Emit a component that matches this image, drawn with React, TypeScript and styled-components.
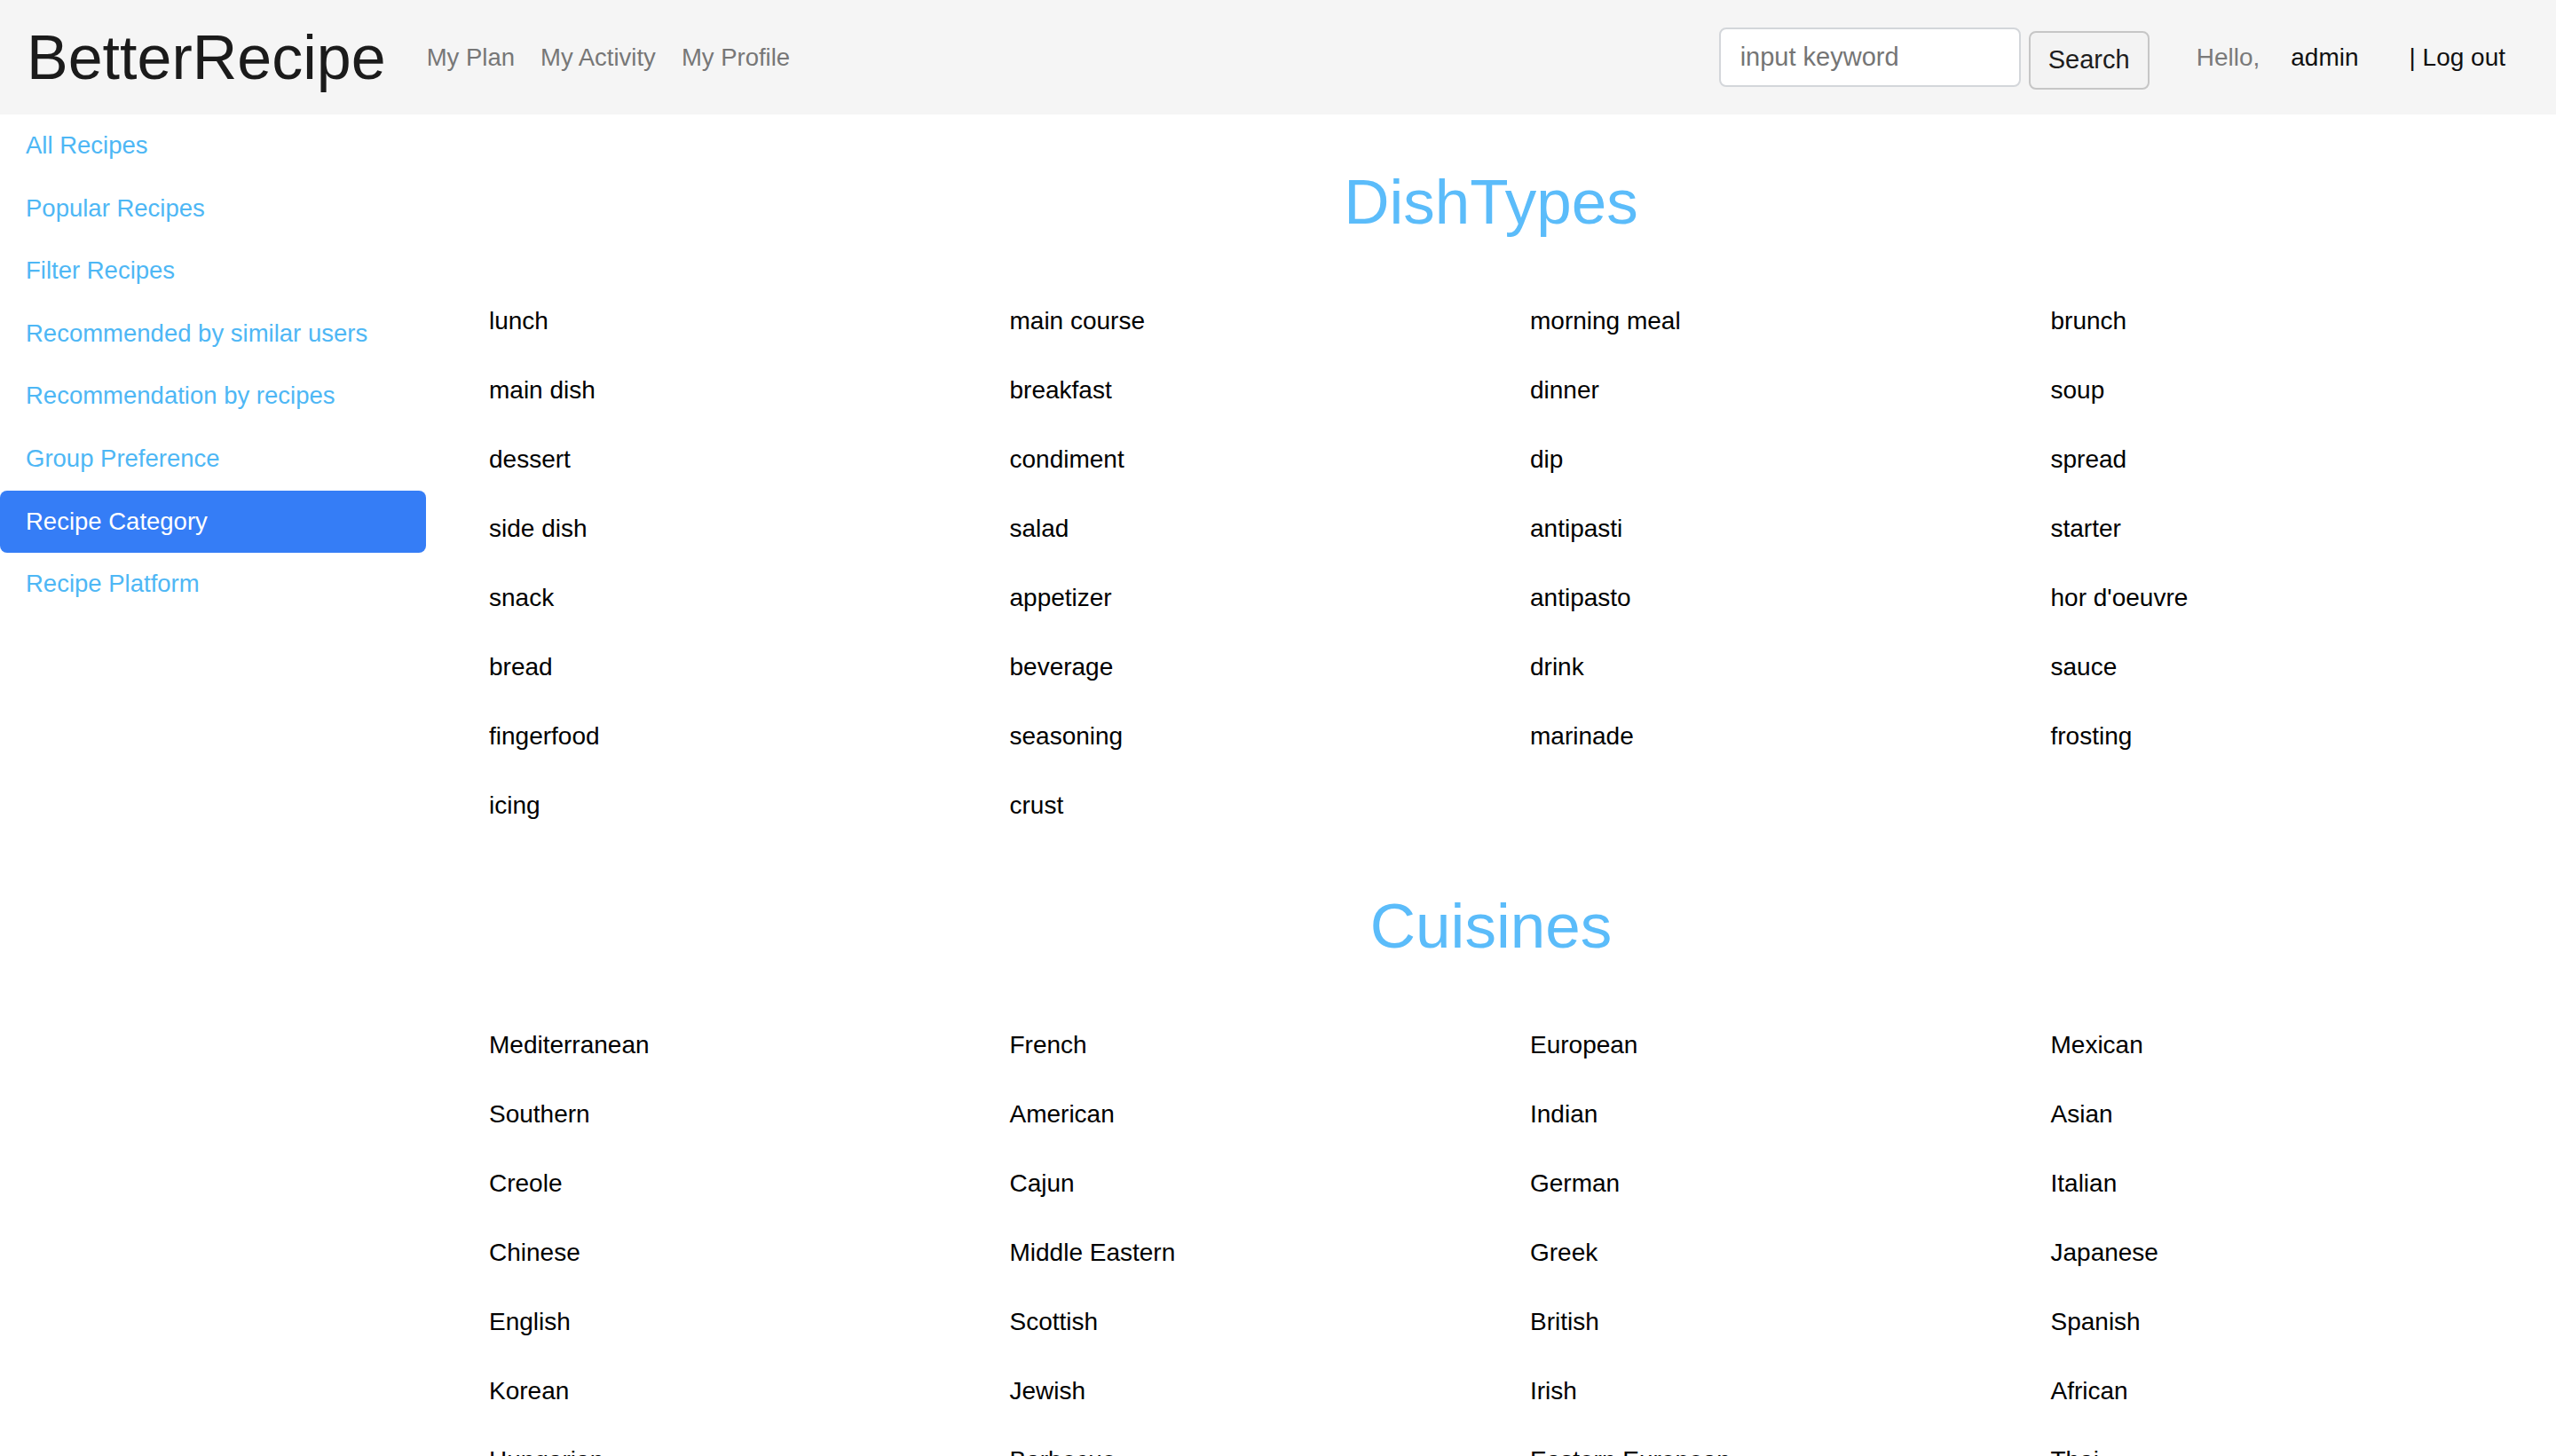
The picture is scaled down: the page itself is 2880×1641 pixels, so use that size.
import React from 'react';
import styled, { createGlobalStyle } from 'styled-components';

const GlobalStyle = createGlobalStyle`
    body {
        margin: 0;
        background: #ffffff;
        font-family: "Liberation Sans", Arial, Helvetica, sans-serif;
    }
`;

const dishTypes = [
    'lunch', 'main course', 'morning meal', 'brunch',
    'main dish', 'breakfast', 'dinner', 'soup',
    'dessert', 'condiment', 'dip', 'spread',
    'side dish', 'salad', 'antipasti', 'starter',
    'snack', 'appetizer', 'antipasto', "hor d'oeuvre",
    'bread', 'beverage', 'drink', 'sauce',
    'fingerfood', 'seasoning', 'marinade', 'frosting',
    'icing', 'crust',
];

const cuisines = [
    'Mediterranean', 'French', 'European', 'Mexican',
    'Southern', 'American', 'Indian', 'Asian',
    'Creole', 'Cajun', 'German', 'Italian',
    'Chinese', 'Middle Eastern', 'Greek', 'Japanese',
    'English', 'Scottish', 'British', 'Spanish',
    'Korean', 'Jewish', 'Irish', 'African',
    'Hungarian', 'Barbecue', 'Eastern European', 'Thai',
];

const sideLinks = [
    'All Recipes',
    'Popular Recipes',
    'Filter Recipes',
    'Recommended by similar users',
    'Recommendation by recipes',
    'Group Preference',
    'Recipe Category',
    'Recipe Platform',
];

const Header = styled.header`
    display: flex;
    align-items: center;
    height: 129px;
    padding: 0 57px 0 30px;
    background: #f5f5f5;
`;

const Brand = styled.a`
    font-size: 70px;
    line-height: 1;
    color: #1b1b1b;
    margin-right: 46px;
    text-decoration: none;
`;

const Nav = styled.nav`
    display: flex;
    gap: 29px;
`;

const NavLink = styled.a`
    font-size: 27.5px;
    color: #777777;
    text-decoration: none;
`;

const RightGroup = styled.div`
    display: flex;
    align-items: center;
    margin-left: auto;
`;

const SearchInput = styled.input`
    box-sizing: border-box;
    width: 340px;
    height: 67px;
    padding: 0 22px;
    border: 2px solid #d3d6da;
    border-radius: 8px;
    background: #ffffff;
    font-family: inherit;
    font-size: 29px;
    color: #212529;
    outline: none;

    ::placeholder {
        color: #6c737a;
    }
`;

const SearchButton = styled.button`
    box-sizing: border-box;
    width: 136px;
    height: 66px;
    margin: 6px 0 0 9px;
    border: 2px solid #c6c6c6;
    border-radius: 8px;
    background: #f3f3f3;
    font-family: inherit;
    font-size: 29px;
    color: #1d1d1d;
`;

const UserText = styled.span<{ muted?: boolean; space: number }>`
    font-size: 28px;
    margin-left: ${({ space }) => space}px;
    color: ${({ muted }) => (muted ? '#7a7a7a' : '#111111')};
`;

const Body = styled.div`
    display: flex;
`;

const Sidebar = styled.aside`
    flex: 0 0 480px;
    display: flex;
    flex-direction: column;
`;

const SideLink = styled.a<{ active?: boolean }>`
    display: block;
    height: 70.6px;
    line-height: 70.6px;
    padding: 0 29px;
    font-size: 27.5px;
    text-decoration: none;
    border-radius: 8px;
    color: ${({ active }) => (active ? '#ffffff' : '#4eb7f5')};
    background: ${({ active }) => (active ? '#357df6' : 'transparent')};
`;

const Main = styled.main`
    flex: 1;
    min-width: 0;
    padding-top: 56px;
`;

const Section = styled.section`
    margin-bottom: 54px;
`;

const SectionTitle = styled.h1`
    margin: 0 0 52px;
    font-size: 71px;
    line-height: 86px;
    font-weight: normal;
    text-align: center;
    color: #5bbcfa;
`;

const ItemGrid = styled.div`
    display: grid;
    grid-template-columns: repeat(4, 586.5px);
    grid-auto-rows: 78px;
    align-items: center;
    margin-left: 71px;
`;

const Item = styled.a`
    font-size: 28px;
    color: #000000;
    text-decoration: none;
`;

const CategorySection = ({ title, items }: { title: string; items: string[] }) => (
    <Section>
        <SectionTitle>{title}</SectionTitle>
        <ItemGrid>
            {items.map(item => <Item key={item}>{item}</Item>)}
        </ItemGrid>
    </Section>
);

const App = () => (
    <>
        <GlobalStyle />
        <Header>
            <Brand>BetterRecipe</Brand>
            <Nav>
                <NavLink>My Plan</NavLink>
                <NavLink>My Activity</NavLink>
                <NavLink>My Profile</NavLink>
            </Nav>
            <RightGroup>
                <SearchInput placeholder="input keyword" />
                <SearchButton>Search</SearchButton>
                <UserText muted space={53}>Hello,</UserText>
                <UserText space={35}>admin</UserText>
                <UserText space={57}>| Log out</UserText>
            </RightGroup>
        </Header>
        <Body>
            <Sidebar>
                {sideLinks.map(link => (
                    <SideLink key={link} active={link === 'Recipe Category'}>{link}</SideLink>
                ))}
            </Sidebar>
            <Main>
                <CategorySection title="DishTypes" items={dishTypes} />
                <CategorySection title="Cuisines" items={cuisines} />
            </Main>
        </Body>
    </>
);

export default App;
